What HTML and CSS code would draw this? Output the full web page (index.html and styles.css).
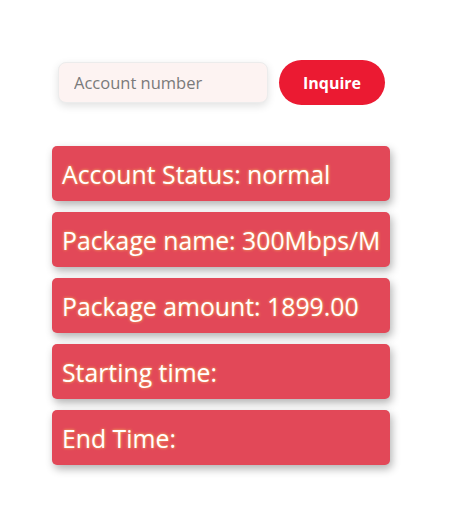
FILE: index.html
```html
<!DOCTYPE html>
<html>
<head>
<meta charset="utf-8">
<link rel="stylesheet" href="styles.css">
</head>
<body>
<div class="page">
  <div class="search">
    <input class="account-input" type="text" placeholder="Account number">
    <button class="inquire-btn">Inquire</button>
  </div>
  <div class="cards">
    <div class="card">Account Status: normal</div>
    <div class="card">Package name: 300Mbps/M</div>
    <div class="card">Package amount: 1899.00</div>
    <div class="card">Starting time:</div>
    <div class="card">End Time:</div>
  </div>
</div>
</body>
</html>
```
FILE: styles.css
```css
html, body {
  margin: 0;
  padding: 0;
  background: #ffffff;
  font-family: "Open Sans", "Noto Sans", sans-serif;
}
.page {
  padding: 60px 0 40px 52px;
  width: 338px;
}
.search {
  display: flex;
  align-items: center;
  gap: 11px;
  padding-left: 6px;
}
.account-input {
  box-sizing: border-box;
  width: 210px;
  height: 41px;
  border: 1px solid #ececec;
  border-radius: 8px;
  background: #fdf3f2;
  box-shadow: 0 3px 8px rgba(0,0,0,0.12);
  padding: 0 15px;
  font-family: inherit;
  font-size: 16.5px;
  color: #333;
  outline: none;
}
.account-input::placeholder {
  color: #7a7a7a;
}
.inquire-btn {
  width: 106px;
  height: 45px;
  border: none;
  border-radius: 23px;
  background: #eb1a32;
  color: #fff;
  font-family: inherit;
  font-weight: 700;
  font-size: 16px;
}
.cards {
  margin-top: 41px;
  display: flex;
  flex-direction: column;
  gap: 11px;
}
.card {
  box-sizing: border-box;
  height: 55px;
  background: #e24858;
  border-radius: 5px;
  box-shadow: 2px 4px 8px rgba(0,0,0,0.3);
  color: #fff;
  font-size: 24.8px;
  display: flex;
  align-items: center;
  padding: 0 10px;
  white-space: nowrap;
  overflow: hidden;
  text-shadow: 0 0 3px #f7c35a;
}
```
